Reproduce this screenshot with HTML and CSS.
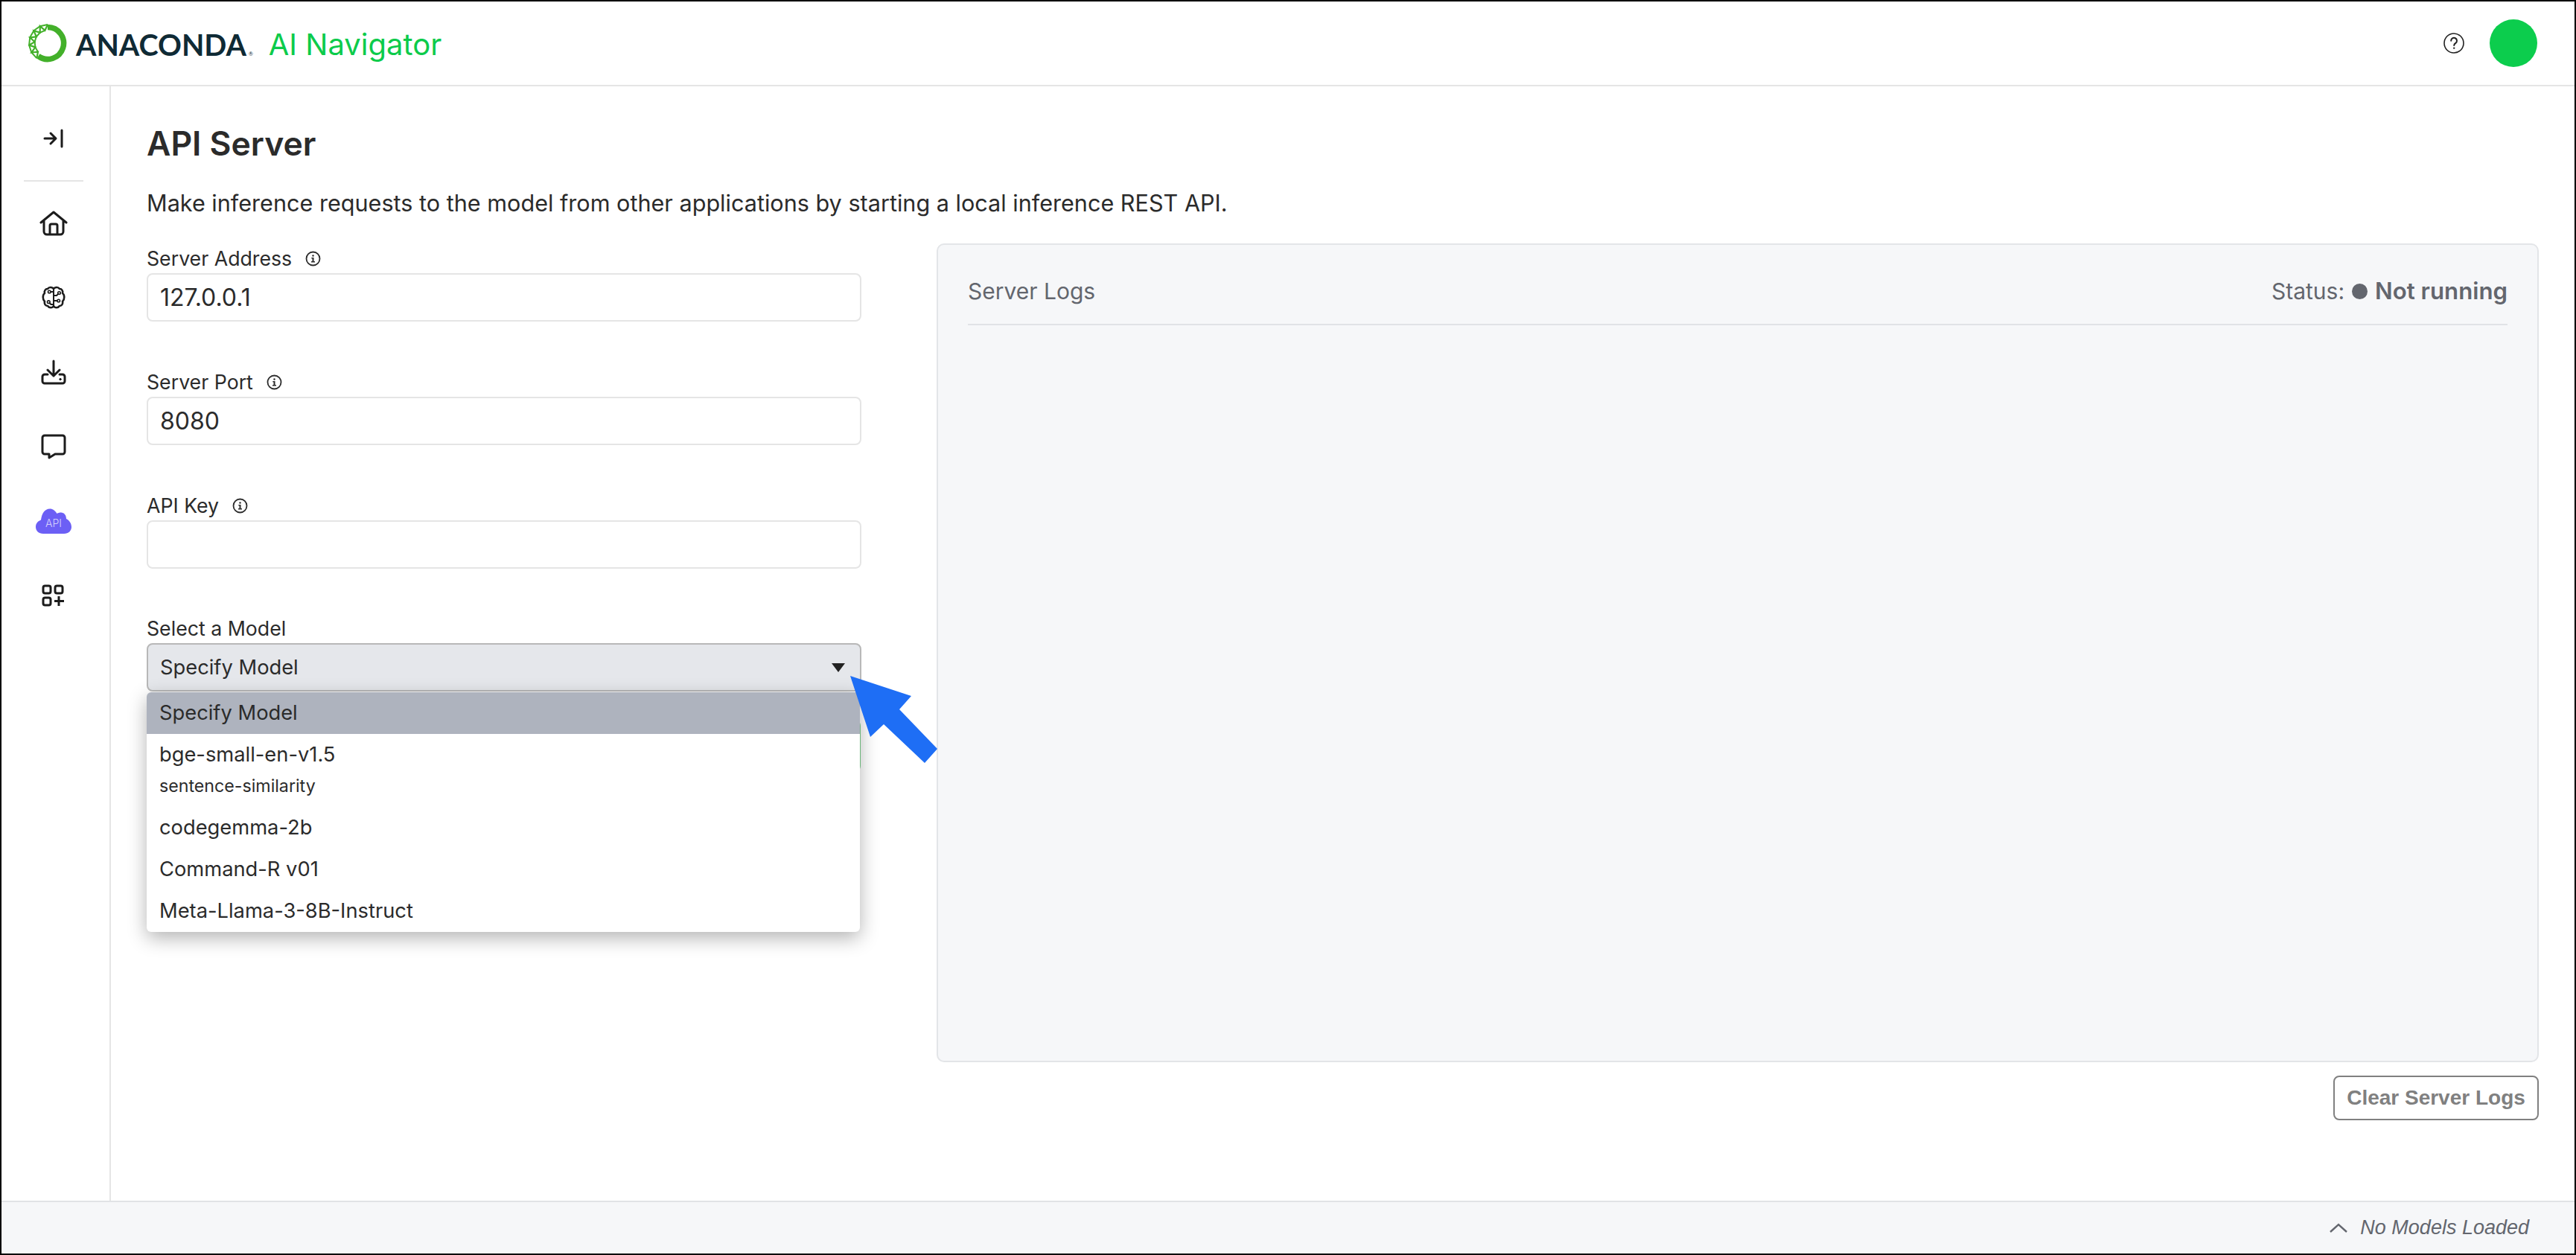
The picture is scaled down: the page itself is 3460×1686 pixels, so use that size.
FILE: index.html
```html
<!DOCTYPE html>
<html lang="en">
<head>
    <meta charset="UTF-8">
    <title>API Server - AI Navigator</title>
    <link rel="stylesheet" href="styles.css">
</head>
<body>
    <div class="window">
        <header class="topbar">
            <svg class="logo-ring" width="52" height="52" viewBox="0 0 52 52" fill="none" stroke="#43b02a">
                <path d="M26 4.500A21.500 21.500 0 1 1 13.400 43.400" stroke-width="7.500"/>
                <path d="M26 1 22.400 8.900 15.800 3.200 15.700 11.800 7.400 9.300 10.800 17.300 2.200 18.300 8.600 24.200 1.100 28.600 9.400 31.400 4.300 38.500 13 37.700 11.300 46.200" stroke-width="2.200"/>
                <path d="M26 1 15.800 3.200 7.400 9.300 2.200 18.300 1.100 28.600 4.300 38.500 11.300 46.200M22.400 8.900 15.700 11.800 10.800 17.300 8.600 24.200 9.400 31.400 13 37.700" stroke-width="2"/>
            </svg>
            <span class="brand">ANACONDA<sup class="reg">®</sup></span>
            <span class="product">AI Navigator</span>
            <div class="topbar-right">
                <svg class="help" width="28" height="28" viewBox="0 0 28 28" fill="none" stroke="#222">
                    <circle cx="14" cy="14" r="13" stroke-width="1.600"/>
                    <path d="M10.200 10.800a3.900 3.900 0 1 1 6.200 3.100c-1.300.9-2.200 1.500-2.200 3" stroke-width="2" stroke-linecap="round"/>
                    <circle cx="14.200" cy="20.600" r="1.200" fill="#222" stroke="none"/>
                </svg>
                <div class="avatar"></div>
            </div>
        </header>

        <div class="body">
            <nav class="sidebar">
                <div class="nav-top">
                    <svg width="32" height="28" viewBox="0 0 32 28" fill="none" stroke="#1c1c1c" stroke-width="3" stroke-linecap="round" stroke-linejoin="round">
                        <path d="M4 14h14M12 7l7 7-7 7M27 3v22"/>
                    </svg>
                </div>
                <div class="nav-item">
                    <svg width="38" height="34" viewBox="0 0 38 34" fill="none" stroke="#1c1c1c" stroke-width="3" stroke-linecap="round" stroke-linejoin="round">
                        <path d="M2 16 19 2l17 14M6 14v14a4 4 0 0 0 4 4h18a4 4 0 0 0 4-4V14M14 32V20a2 2 0 0 1 2-2h6a2 2 0 0 1 2 2v12"/>
                    </svg>
                </div>
                <div class="nav-item">
                    <svg width="34" height="34" viewBox="0 0 34 34" fill="none" stroke="#1c1c1c" stroke-width="2.600" stroke-linecap="round" stroke-linejoin="round">
                        <path d="M17 5c-1.500-2.500-6-3-8 0-3 0-5 3-4 6-3 2-3 8 0 11-1 3 1 6 4 6 2 3 6.500 3 8 0 1.500 3 6 3 8 0 3 0 5-3 4-6 3-3 3-9 0-11 1-3-1-6-4-6-2-3-6.500-2.500-8 0z"/>
                        <path d="M17 5v24M13.300 9H17M17 14h4l2-2M17 21h4.700M17 26h-3.500l-2-2" stroke-width="2"/>
                        <circle cx="11.300" cy="9" r="1.800" stroke-width="1.600"/>
                        <circle cx="24.500" cy="10.500" r="1.800" stroke-width="1.600"/>
                        <circle cx="23.700" cy="21" r="1.800" stroke-width="1.600"/>
                        <circle cx="10.300" cy="22.700" r="1.800" stroke-width="1.600"/>
                    </svg>
                </div>
                <div class="nav-item">
                    <svg width="34" height="34" viewBox="0 0 34 34" fill="none" stroke="#1c1c1c" stroke-width="3" stroke-linecap="round" stroke-linejoin="round">
                        <path d="M17 2v20M9 14l8 8 8-8M9 20H5a3 3 0 0 0-3 3v6a3 3 0 0 0 3 3h24a3 3 0 0 0 3-3v-6a3 3 0 0 0-3-3h-4"/>
                        <circle cx="26" cy="26.500" r="1.200" fill="#1c1c1c" stroke-width="1"/>
                    </svg>
                </div>
                <div class="nav-item">
                    <svg width="34" height="34" viewBox="0 0 34 34" fill="none" stroke="#1c1c1c" stroke-width="3" stroke-linejoin="round">
                        <path d="M5 2h24a3 3 0 0 1 3 3v19a3 3 0 0 1-3 3H19l-8 5v-5H5a3 3 0 0 1-3-3V5a3 3 0 0 1 3-3z"/>
                    </svg>
                </div>
                <div class="nav-item">
                    <div class="cloud-wrap">
                        <svg width="48" height="35" viewBox="0 0 48 35" fill="#6c5ff5">
                            <path d="M10 34C4 34 0 30 0 25c0-5 3-8 7-9.500C8 7 12 .5 19 .5c4 0 7 2.500 9.500 6.500 1.500-1 3.500-1.500 5.500-1.500 4 0 7 3.500 7 8.500 4 2 7 6 7 11 0 5-4 9-10 9z"/>
                        </svg>
                        <span class="cloud-label">API</span>
                    </div>
                </div>
                <div class="nav-item">
                    <svg width="32" height="30" viewBox="0 0 32 30" fill="none" stroke="#1c1c1c" stroke-width="3" stroke-linejoin="round">
                        <rect x="2" y="2" width="10" height="10" rx="2.500"/>
                        <rect x="18" y="2" width="10" height="10" rx="2.500"/>
                        <rect x="2" y="18" width="10" height="10" rx="2.500"/>
                        <path d="M23 16v13M17 22.500h13"/>
                    </svg>
                </div>
            </nav>

            <main class="content">
                <h1 class="title">API Server</h1>
                <p class="intro">Make inference requests to the model from other applications by starting a local inference REST API.</p>

                <div class="columns">
                    <section class="form">
                        <div class="field">
                            <label class="field-label">Server Address <svg class="info" width="21" height="21" viewBox="0 0 21 21"><use href="#info-icon"/></svg></label>
                            <div class="input">127.0.0.1</div>
                        </div>
                        <div class="field">
                            <label class="field-label">Server Port <svg class="info" width="21" height="21" viewBox="0 0 21 21"><use href="#info-icon"/></svg></label>
                            <div class="input">8080</div>
                        </div>
                        <div class="field">
                            <label class="field-label">API Key <svg class="info" width="21" height="21" viewBox="0 0 21 21"><use href="#info-icon"/></svg></label>
                            <div class="input"></div>
                        </div>
                        <div class="field field-select">
                            <label class="field-label">Select a Model</label>
                            <div class="select">
                                <span>Specify Model</span>
                                <span class="caret"></span>
                            </div>
                            <div class="start-btn"></div>
                            <ul class="menu">
                                <li class="menu-item selected">Specify Model</li>
                                <li class="menu-item double">bge-small-en-v1.5<small class="menu-sub">sentence-similarity</small></li>
                                <li class="menu-item">codegemma-2b</li>
                                <li class="menu-item">Command-R v01</li>
                                <li class="menu-item">Meta-Llama-3-8B-Instruct</li>
                            </ul>
                        </div>
                    </section>

                    <section class="logs-col">
                        <div class="logs">
                            <div class="logs-head">
                                <span>Server Logs</span>
                                <span class="status">Status:<i class="dot"></i><b>Not running</b></span>
                            </div>
                        </div>
                        <button class="clear-btn">Clear Server Logs</button>
                    </section>
                </div>
            </main>
        </div>

        <footer class="statusbar">
            <svg width="24" height="13" viewBox="0 0 24 13" fill="none" stroke="#63666e" stroke-width="2.400">
                <path d="M1 12 12 2l11 10"/>
            </svg>
            <em>No Models Loaded</em>
        </footer>

        <svg class="callout" width="120" height="120" viewBox="0 0 120 120">
            <polygon fill="#1e6ef5" points="2,0 84,27 68,45 119,98 102,117 47,65 29,82"/>
        </svg>
    </div>

    <svg width="0" height="0" class="defs">
        <symbol id="info-icon" viewBox="0 0 21 21">
            <circle cx="10.500" cy="10.500" r="9" fill="none" stroke="#2b2b2b" stroke-width="1.800"/>
            <rect x="9.500" y="9" width="2" height="6" fill="#2b2b2b"/>
            <rect x="8" y="14" width="5" height="1.500" fill="#2b2b2b"/>
            <rect x="8.300" y="9" width="2" height="1.400" fill="#2b2b2b"/>
            <circle cx="10.500" cy="6.500" r="1.200" fill="#2b2b2b"/>
        </symbol>
    </svg>
</body>
</html>
```

FILE: styles.css
```css
* {
    box-sizing: border-box;
}

html, body {
    margin: 0;
    padding: 0;
    height: 100%;
}

body {
    font-family: 'Inter', sans-serif;
    color: #2b2b2b;
    background: #fff;
}

.defs {
    position: absolute;
}

.window {
    position: relative;
    width: 3460px;
    height: 1686px;
    border: 2px solid #000;
    display: flex;
    flex-direction: column;
    overflow: hidden;
}

/* top bar */
.topbar {
    height: 114px;
    flex: none;
    display: flex;
    align-items: center;
    padding-left: 36px;
    border-bottom: 2px solid #e5e5e5;
}

.logo-ring {
    margin-right: 12px;
}

.brand {
    font-family: 'Lato', sans-serif;
    font-size: 39.5px;
    font-weight: 700;
    color: #0f2a35;
    margin-top: 3px;
}

.reg {
    font-size: 7px;
    font-weight: 400;
    vertical-align: baseline;
    margin-left: 3px;
}

.product {
    font-size: 40px;
    color: #0ccb4b;
    margin-left: 21px;
    margin-top: 3px;
}

.topbar-right {
    margin-left: auto;
    display: flex;
    align-items: center;
    gap: 34px;
    padding-right: 50px;
}

.avatar {
    width: 64px;
    height: 64px;
    border-radius: 50%;
    background: #0ccd4d;
}

/* sidebar */
.body {
    flex: 1;
    display: flex;
    min-height: 0;
}

.sidebar {
    width: 147px;
    flex: none;
    padding-right: 5px;
    border-right: 2px solid #e5e5e5;
    display: flex;
    flex-direction: column;
    align-items: center;
}

.nav-top {
    width: 80px;
    height: 128px;
    padding-top: 14px;
    display: flex;
    align-items: center;
    justify-content: center;
    border-bottom: 2px solid #e5e5e5;
    margin-bottom: 6px;
}

.nav-item {
    height: 100px;
    flex: none;
    display: flex;
    align-items: center;
    justify-content: center;
}

.cloud-wrap {
    position: relative;
    display: flex;
}

.cloud-label {
    position: absolute;
    left: 0;
    right: 0;
    top: 11px;
    text-align: center;
    font-size: 14px;
    font-weight: 300;
    color: #d5d1fc;
}

/* main */
.content {
    flex: 1;
    padding: 49px 48px 0;
    min-width: 0;
}

.title {
    margin: 0;
    font-size: 44.5px;
    line-height: 56px;
    font-weight: 600;
}

.intro {
    margin: 31px 0 0;
    font-size: 30.6px;
    line-height: 41px;
}

.columns {
    display: flex;
    margin-top: 34px;
}

.form {
    width: 960px;
    flex: none;
}

.field {
    height: 166px;
    padding-top: 5px;
}

.field-label {
    display: flex;
    align-items: center;
    gap: 18px;
    font-size: 26.7px;
    line-height: 31px;
}

.input {
    height: 65px;
    margin-top: 4px;
    border: 2px solid #e5e5e5;
    border-radius: 8px;
    padding-left: 16px;
    font-size: 32px;
    line-height: 61px;
}

.field-select {
    position: relative;
    margin-top: -1px;
}

.select {
    height: 65px;
    margin-top: 4px;
    border: 2px solid #b8b8b8;
    border-radius: 8px;
    background: #e5e7eb;
    padding: 0 20px 0 16px;
    font-size: 27.3px;
    display: flex;
    align-items: center;
    justify-content: space-between;
}

.caret {
    width: 0;
    height: 0;
    border-left: 9px solid transparent;
    border-right: 9px solid transparent;
    border-top: 12px solid #222;
}

/* start button, almost fully covered by the open menu */
.start-btn {
    position: absolute;
    top: 143px;
    left: 0;
    right: 1px;
    height: 70px;
    background: #7fd48f;
    border-radius: 8px;
}

.menu {
    position: absolute;
    top: 106px;
    left: 0;
    width: 958px;
    margin: 0;
    padding: 0;
    list-style: none;
    background: #fff;
    border-radius: 6px;
    overflow: hidden;
    box-shadow: 0 8px 26px rgba(0, 0, 0, 0.3);
    font-size: 27.3px;
}

.menu-item {
    height: 56px;
    padding-left: 17px;
    line-height: 56px;
}

.menu-item.selected {
    background: #aeb3be;
}

.menu-item.double {
    height: 98px;
}

.menu-sub {
    display: block;
    font-size: 23.2px;
    line-height: 28px;
}

/* logs */
.logs-col {
    flex: 1;
    margin-left: 101px;
    display: flex;
    flex-direction: column;
    align-items: flex-end;
}

.logs {
    width: 100%;
    height: 1100px;
    background: #f6f7f9;
    border: 2px solid #e3e5e8;
    border-radius: 10px;
    padding: 0 40px;
}

.logs-head {
    height: 108px;
    padding-top: 18px;
    display: flex;
    align-items: center;
    justify-content: space-between;
    border-bottom: 2px solid #e1e3e6;
    color: #63666e;
    font-size: 30px;
}

.status {
    display: flex;
    align-items: center;
}

.dot {
    width: 21px;
    height: 21px;
    border-radius: 50%;
    background: #63666e;
    margin: 0 10px;
}

.status b {
    font-size: 31.2px;
    font-weight: 600;
}

.clear-btn {
    margin-top: 18px;
    width: 276px;
    height: 60px;
    padding: 0;
    border: 2px solid #808080;
    border-radius: 8px;
    background: #fff;
    color: #808080;
    font-family: 'Liberation Sans', Arial, sans-serif;
    font-weight: 700;
    font-size: 28px;
}

/* footer */
.statusbar {
    height: 71px;
    flex: none;
    border-top: 2px solid #e1e3e6;
    background: #f6f7f9;
    display: flex;
    align-items: center;
    justify-content: flex-end;
    gap: 17px;
    padding-right: 61px;
    color: #63666e;
    font-family: 'Liberation Sans', Arial, sans-serif;
    font-size: 27px;
}

/* arrow pointing at the dropdown */
.callout {
    position: absolute;
    left: 1138px;
    top: 906px;
}
```
